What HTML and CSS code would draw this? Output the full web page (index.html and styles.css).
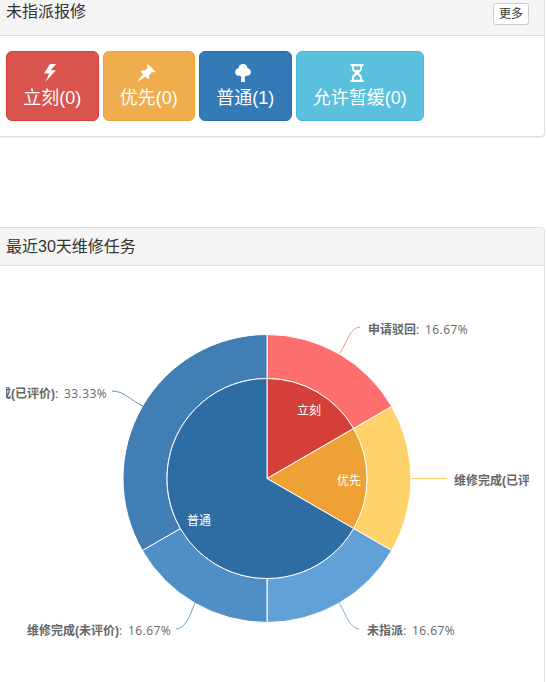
FILE: index.html
```html
<!DOCTYPE html>
<html lang="zh-CN">
<head>
    <meta charset="UTF-8">
    <meta name="viewport" content="width=device-width, initial-scale=1.0">
    <title>维修任务</title>
    <link rel="stylesheet" href="styles.css">
</head>
<body>
    <div class="panel panel-repair">
        <div class="panel-heading heading-split">
            <h3 class="panel-title">未指派报修</h3>
            <a class="btn-more">更多</a>
        </div>
        <div class="panel-body repair-body">
            <a class="btn-level btn-danger">
                <svg class="level-icon" viewBox="0 0 18 18"><path d="M9 0 L3 9.5 L8.3 9.5 L4.3 18 L15 6.3 L9.7 6.3 L15 0 Z"/></svg>
                <span>立刻(0)</span>
            </a>
            <a class="btn-level btn-warning">
                <svg class="level-icon" viewBox="0 0 18 18"><path d="M10.5 0 L18.5 7.5 L17 8.5 L15 8 L12 11.5 Q13 14 11 15 L3.5 7.5 Q5.5 5.5 8 6.5 L11 3.5 L10 2 Z M0 18 L6 10.5 L8.5 12.5 Z"/></svg>
                <span>优先(0)</span>
            </a>
            <a class="btn-level btn-primary">
                <svg class="level-icon" viewBox="0 0 18 18"><circle cx="9" cy="4.5" r="4.5"/><circle cx="5" cy="8" r="3.8"/><circle cx="13" cy="8" r="3.8"/><circle cx="9" cy="9" r="4"/><path d="M7.6 10 H10.4 L11 18 H7 Z"/></svg>
                <span>普通(1)</span>
            </a>
            <a class="btn-level btn-info">
                <svg class="level-icon" viewBox="0 0 18 18"><path d="M2.5 0 H15.5 V2.2 H14 V4.5 C14 7 11.5 8 10.8 9 C11.5 10 14 11 14 13.5 V15.8 H15.5 V18 H2.5 V15.8 H4 V13.5 C4 11 6.5 10 7.2 9 C6.5 8 4 7 4 4.5 V2.2 H2.5 Z M5.8 2.2 V4.5 C5.8 5 6 5.5 6.3 6 H11.7 C12 5.5 12.2 5 12.2 4.5 V2.2 Z M9 10.5 C8 11.5 5.8 12.5 5.8 14.5 V15.8 H12.2 V14.5 C12.2 12.5 10 11.5 9 10.5 Z" fill-rule="evenodd"/></svg>
                <span>允许暂缓(0)</span>
            </a>
        </div>
    </div>

    <div class="panel panel-chart">
        <div class="panel-heading">
            <h3 class="panel-title">最近30天维修任务</h3>
        </div>
        <div class="panel-body chart-body">
            <svg class="pie-chart" width="523" height="420" viewBox="0 0 523 420">
                <!-- 外环 -->
                <g class="slices">
                    <path fill="#ff6e6e" d="M261 68.5 A144 144 0 0 1 385.7 140.5 L347.6 162.5 A100 100 0 0 0 261 112.5 Z"/>
                    <path fill="#ffd36a" d="M385.7 140.5 A144 144 0 0 1 385.7 284.5 L347.6 262.5 A100 100 0 0 0 347.6 162.5 Z"/>
                    <path fill="#62a0d8" d="M385.7 284.5 A144 144 0 0 1 261 356.5 L261 312.5 A100 100 0 0 0 347.6 262.5 Z"/>
                    <path fill="#508fc6" d="M261 356.5 A144 144 0 0 1 136.3 284.5 L174.4 262.5 A100 100 0 0 0 261 312.5 Z"/>
                    <path fill="#417eb4" d="M136.3 284.5 A144 144 0 0 1 261 68.5 L261 112.5 A100 100 0 0 0 174.4 262.5 Z"/>
                </g>
                <!-- 内圈 -->
                <g class="slices">
                    <path fill="#d43f3a" d="M261 212.5 L261 112.5 A100 100 0 0 1 347.6 162.5 Z"/>
                    <path fill="#eea236" d="M261 212.5 L347.6 162.5 A100 100 0 0 1 347.6 262.5 Z"/>
                    <path fill="#2e6da4" d="M261 212.5 L347.6 262.5 A100 100 0 1 1 261 112.5 Z"/>
                </g>
                <text class="inner-label" x="291" y="149">立刻</text>
                <text class="inner-label" x="331" y="219">优先</text>
                <text class="inner-label" x="181" y="259">普通</text>

                <path class="lead" stroke="#ff8a8a" d="M334 87 C342 74 344 62 354 61"/>
                <path class="lead" stroke="#ffd36a" d="M406 212.5 H441"/>
                <path class="lead" stroke="#7fb0dd" d="M333.5 337 C341 351 344 362 353 363"/>
                <path class="lead" stroke="#6a9fcf" d="M189 337 C183 351 180 362 170 363"/>
                <path class="lead" stroke="#5f93c2" d="M106 125 C118 125 124 134 137 140"/>

                <text class="out-label" x="362" y="68"><tspan class="out-name">申请驳回</tspan>: 16.67%</text>
                <text class="out-label" x="448" y="219"><tspan class="out-name">维修完成(已评价)</tspan>: 16.67%</text>
                <text class="out-label" x="361" y="369"><tspan class="out-name">未指派</tspan>: 16.67%</text>
                <text class="out-label out-end" x="165" y="369"><tspan class="out-name">维修完成(未评价)</tspan>: 16.67%</text>
                <text class="out-label out-end" x="101" y="132"><tspan class="out-name">维修完成(已评价)</tspan>: 33.33%</text>
            </svg>
        </div>
    </div>
</body>
</html>
```

FILE: styles.css
```css
html, body {
    height: 100%;
    overflow: hidden;
}

body {
    margin: 0;
    background: #fff;
    color: #333;
    font-family: "Liberation Sans", "Noto Sans CJK SC", sans-serif;
    font-size: 14px;
}

.panel {
    margin: 0 2px 0 -10px;
    background: #fff;
    border: 1px solid #ddd;
    border-radius: 4px;
    box-shadow: 0 1px 1px rgba(0, 0, 0, 0.05);
}

.panel-repair {
    margin-top: -8px;
    margin-bottom: 90px;
}

.panel-heading {
    padding: 10px 15px;
    background: #f5f5f5;
    border-bottom: 1px solid #ddd;
    border-radius: 3px 3px 0 0;
}

.heading-split {
    display: flex;
    justify-content: space-between;
    align-items: flex-start;
}

.panel-title {
    margin: 0;
    font-size: 16px;
    font-weight: 400;
    line-height: 17px;
}

.btn-more {
    padding: 1px 5px;
    background: #fff;
    border: 1px solid #ccc;
    border-radius: 3px;
    font-size: 12px;
    line-height: 18px;
}

.panel-body {
    padding: 15px;
}

.repair-body {
    display: flex;
    gap: 4px;
}

.btn-level {
    display: flex;
    flex-direction: column;
    align-items: center;
    box-sizing: border-box;
    height: 70px;
    padding: 12px 16.25px 0;
    border: 1px solid transparent;
    border-radius: 6px;
    color: #fff;
    font-size: 18px;
    line-height: 24px;
}

.level-icon {
    display: block;
    width: 18px;
    height: 18px;
    margin: 0 5px 4px 0;
    fill: #fff;
    overflow: visible;
}

.btn-danger {
    background: #d9534f;
    border-color: #d43f3a;
}

.btn-warning {
    background: #f0ad4e;
    border-color: #eea236;
}

.btn-primary {
    background: #337ab7;
    border-color: #2e6da4;
}

.btn-info {
    background: #5bc0de;
    border-color: #46b8da;
}

.chart-body {
    padding: 0 15px;
}

.pie-chart {
    display: block;
    overflow: hidden;
}

.slices path {
    stroke: #fff;
    stroke-width: 1;
}

.inner-label {
    fill: #fff;
    font-size: 12px;
}

.lead {
    fill: none;
    stroke-width: 1;
}

.out-label {
    fill: #666;
    font-family: "Open Sans", "Noto Sans CJK SC", sans-serif;
    font-size: 12px;
    letter-spacing: 0.4px;
    word-spacing: 2px;
}

.out-end {
    text-anchor: end;
}

.out-name {
    font-family: "Liberation Sans", "Noto Sans CJK SC", sans-serif;
    font-weight: 700;
    letter-spacing: 0;
}
```
